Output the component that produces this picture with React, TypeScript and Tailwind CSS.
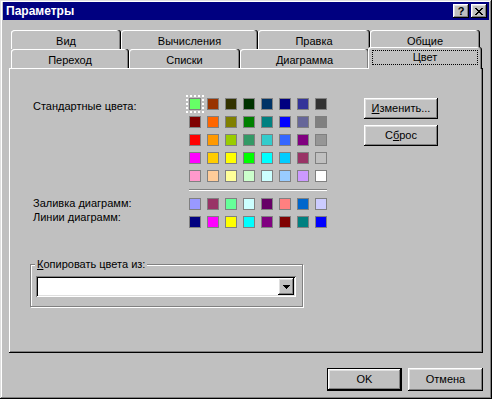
import React from 'react';

const raised =
  'shadow-[inset_-1px_-1px_#000,inset_1px_1px_#fff,inset_-2px_-2px_#808080,inset_2px_2px_#dfdfdf]';

const standard = [
  ['#66ff66', '#993300', '#333300', '#003300', '#003366', '#000080', '#333399', '#333333'],
  ['#800000', '#ff6600', '#808000', '#008000', '#008080', '#0000ff', '#666699', '#808080'],
  ['#ff0000', '#ff9900', '#99cc00', '#339966', '#33cccc', '#3366ff', '#800080', '#969696'],
  ['#ff00ff', '#ffcc00', '#ffff00', '#00ff00', '#00ffff', '#00ccff', '#993366', '#c0c0c0'],
  ['#ff99cc', '#ffcc99', '#ffff99', '#ccffcc', '#ccffff', '#99ccff', '#cc99ff', '#ffffff'],
];

const chartFill = ['#9999ff', '#993366', '#66ff99', '#ccffff', '#660066', '#ff8080', '#0066cc', '#ccccff'];
const chartLines = ['#000080', '#ff00ff', '#ffff00', '#00ffff', '#800080', '#800000', '#008080', '#0000ff'];

const Swatch: React.FC<{ color: string; selected?: boolean }> = ({ color, selected }) => (
  <div
    className={`w-[12px] h-[12px] border border-[#808080] ${
      selected ? 'outline-2 outline-dotted outline-white outline-offset-[1px]' : ''
    }`}
    style={{ backgroundColor: color }}
  />
);

const Tab: React.FC<{ label: string; width: string }> = ({ label, width }) => (
  <div
    className={`${width} h-[19px] pt-[3px] leading-[16px] text-center rounded-t-[3px] shadow-[inset_-1px_0_#000,inset_-2px_0_#808080,inset_1px_1px_#fff]`}
  >
    {label}
  </div>
);

const Button: React.FC<{ children: React.ReactNode; className?: string }> = ({ children, className = '' }) => (
  <div className={`flex items-center justify-center bg-[#c0c0c0] ${raised} ${className}`}>{children}</div>
);

export default function App() {
  return (
    <div className="w-[492px] h-[399px] bg-[#c0c0c0] pt-[2px] px-[3px] text-[11px] text-black font-['Liberation_Sans',Arial,sans-serif] shadow-[inset_-1px_-1px_#000,inset_1px_1px_#dfdfdf,inset_-2px_-2px_#808080,inset_2px_2px_#fff]">
      {/* Title bar */}
      <div className="flex items-center h-[18px] bg-[#000080] pl-[3px] pr-[2px]">
        <span className="text-white font-bold text-[12px]">Параметры</span>
        <div className="ml-auto flex gap-[2px]">
          <Button className="w-[16px] h-[14px]">
            <span className="font-bold text-[11px] leading-none mt-[1px]">?</span>
          </Button>
          <Button className="w-[16px] h-[14px]">
            <svg width="8" height="7" viewBox="0 0 8 7">
              <path
                d="M0 0h2v1H0zM6 0h2v1H6zM1 1h2v1H1zM5 1h2v1H5zM2 2h4v1H2zM3 3h2v1H3zM2 4h4v1H2zM1 5h2v1H1zM5 5h2v1H5zM0 6h2v1H0zM6 6h2v1H6z"
                fill="#000"
              />
            </svg>
          </Button>
        </div>
      </div>

      <div className="px-[6px] pt-[10px]">
        {/* Tabs */}
        <div className="flex pl-[2px]">
          <Tab label="Вид" width="w-[110px]" />
          <Tab label="Вычисления" width="w-[137px]" />
          <Tab label="Правка" width="w-[112px]" />
          <Tab label="Общие" width="w-[110px]" />
        </div>
        <div className="flex pl-[2px] h-[19px]">
          <Tab label="Переход" width="w-[118px]" />
          <Tab label="Списки" width="w-[111px]" />
          <Tab label="Диаграмма" width="w-[129px]" />
          <div className="relative z-10 w-[114px] h-[22px] -mt-[2px] -ml-[1px] bg-[#c0c0c0] rounded-t-[3px] pt-[3px] px-[4px] shadow-[inset_-1px_0_#000,inset_-2px_0_#808080,inset_1px_1px_#fff]">
            <div className="h-[15px] leading-[13px] text-center border border-dotted border-black">Цвет</div>
          </div>
        </div>

        {/* Panel */}
        <div className="h-[285px] pt-[30px] shadow-[inset_-1px_-1px_#000,inset_1px_1px_#fff,inset_-2px_-2px_#808080]">
          <div className="flex pl-[24px]">
            <div className="w-[156px]">
              <div className="mt-[2px] leading-[13px]">Стандартные цвета:</div>
              <div className="mt-[83px] leading-[14px]">
                <div>Заливка диаграмм:</div>
                <div>Линии диаграмм:</div>
              </div>
            </div>

            <div className="w-[138px]">
              <div className="grid grid-cols-8 gap-[6px]">
                {standard.flat().map((c, i) => (
                  <Swatch key={i} color={c} selected={i === 0} />
                ))}
              </div>
              <div className="mt-[7px] h-[2px] border-t border-[#808080] border-b border-b-white" />
              <div className="mt-[7px] grid grid-cols-8 gap-[6px]">
                {chartFill.map((c, i) => (
                  <Swatch key={'f' + i} color={c} />
                ))}
                {chartLines.map((c, i) => (
                  <Swatch key={'l' + i} color={c} />
                ))}
              </div>
            </div>

            <div className="ml-[37px] flex flex-col gap-[6px]">
              <Button className="w-[74px] h-[21px]">
                <span>
                  <span className="underline">И</span>зменить...
                </span>
              </Button>
              <Button className="w-[74px] h-[21px]">
                <span>
                  С<span className="underline">б</span>рос
                </span>
              </Button>
            </div>
          </div>

          {/* Copy colours group */}
          <div className="relative ml-[21px] mt-[36px] w-[273px] h-[43px] border border-[#808080] shadow-[inset_1px_1px_#fff,1px_1px_#fff] pl-[5px] pt-[11px]">
            <span className="absolute left-[4px] -top-[7px] px-[2px] bg-[#c0c0c0] leading-[13px]">
              <span className="underline">К</span>опировать цвета из:
            </span>
            <div className="w-[260px] h-[21px] bg-white flex justify-end p-[2px] shadow-[inset_1px_1px_#808080,inset_-1px_-1px_#fff,inset_2px_2px_#000,inset_-2px_-2px_#dfdfdf]">
              <Button className="w-[16px] h-[17px]">
                <svg width="7" height="4" viewBox="0 0 7 4">
                  <path d="M0 0h7v1H0zM1 1h5v1H1zM2 2h3v1H2zM3 3h1v1H3z" fill="#000" />
                </svg>
              </Button>
            </div>
          </div>
        </div>
      </div>

      {/* Dialog buttons */}
      <div className="flex justify-end gap-[6px] pt-[15px] pr-[6px]">
        <div className="w-[75px] h-[23px] border border-black">
          <Button className="w-full h-full">OK</Button>
        </div>
        <Button className="w-[75px] h-[23px]">Отмена</Button>
      </div>
    </div>
  );
}
